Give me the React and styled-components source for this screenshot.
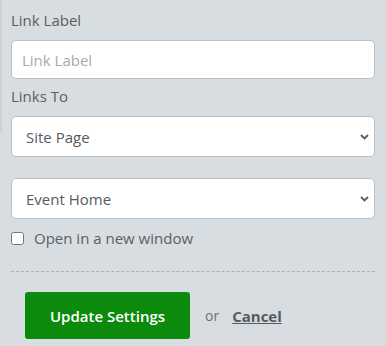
import React, { useState } from "react";
import styled, { createGlobalStyle } from "styled-components";

const GlobalStyle = createGlobalStyle`
  html, body {
    margin: 0;
    padding: 0;
    background: #d8dde1;
  }
  body {
    font-family: "Open Sans", "Liberation Sans", sans-serif;
  }
`;

const Panel = styled.div`
  position: relative;
  width: 386px;
  height: 346px;
  box-sizing: border-box;
  padding: 10px 11px 0 11px;
  background: #d8dde1;
  color: #555b60;
  overflow: hidden;
`;

const EdgeStrip = styled.div`
  position: absolute;
  left: 0;
  top: 0;
  width: 2px;
  height: 133px;
  background: #cdd2d6;
`;

const Label = styled.label`
  display: block;
  font-size: 15px;
  line-height: 20px;
  color: #5a6065;
  margin-bottom: ${(p) => p.$gap || 10}px;
`;

const TextInput = styled.input`
  display: block;
  width: 100%;
  height: 39px;
  box-sizing: border-box;
  border: 1px solid #b9c0c6;
  border-radius: 5px;
  background: #fff;
  padding: 0 10px;
  font-family: inherit;
  font-size: 15px;
  color: #555b60;
  outline: none;
  &::placeholder {
    color: #a4abb1;
  }
`;

const Field = styled.div`
  margin-bottom: ${(p) => p.$gap || 0}px;
`;

const SelectWrap = styled.div`
  position: relative;
  margin-bottom: ${(p) => p.$gap || 0}px;
`;

const Select = styled.select`
  display: block;
  width: 100%;
  height: 41px;
  box-sizing: border-box;
  appearance: none;
  -webkit-appearance: none;
  border: 1px solid #b9c0c6;
  border-radius: 5px;
  background: #fff;
  padding: 0 30px 0 14px;
  font-family: inherit;
  font-size: 15px;
  color: #555b60;
  outline: none;
`;

const Chevron = styled.svg`
  position: absolute;
  right: 6px;
  top: 50%;
  margin-top: -3px;
  width: 9px;
  height: 6px;
  pointer-events: none;
`;

const CheckRow = styled.label`
  display: flex;
  align-items: center;
  gap: 10px;
  font-size: 15px;
  line-height: 20px;
  color: #5a6065;
  margin-top: 9px;
`;

const Check = styled.input`
  width: 13px;
  height: 13px;
  margin: 0;
`;

const Divider = styled.div`
  border-top: 1px dashed #a9b0b6;
  margin-top: 23px;
`;

const Actions = styled.div`
  display: flex;
  align-items: center;
  padding: 20px 14px 0;
`;

const PrimaryButton = styled.button`
  width: 165px;
  height: 47px;
  border: none;
  border-radius: 3px;
  background: #0b8a0b;
  color: #fff;
  font-family: inherit;
  font-size: 15px;
  font-weight: 600;
  cursor: pointer;
`;

const Or = styled.span`
  margin-left: 15px;
  font-size: 14px;
  color: #6a7075;
`;

const CancelLink = styled.a`
  margin-left: 13px;
  font-size: 15px;
  font-weight: 700;
  color: #555b60;
  text-decoration: underline;
  cursor: pointer;
`;

const ChevronIcon = () => (
  <Chevron viewBox="0 0 9 6">
    <path d="M1 1l3.5 3.5L8 1" fill="none" stroke="#555b60" strokeWidth="1.8" />
  </Chevron>
);

export default function App() {
  const [label, setLabel] = useState("");
  const [linkType, setLinkType] = useState("site");
  const [page, setPage] = useState("event-home");
  const [newWindow, setNewWindow] = useState(false);

  return (
    <>
      <GlobalStyle />
      <Panel>
        <EdgeStrip />
        <Field $gap={7}>
          <Label htmlFor="link-label">Link Label</Label>
          <TextInput
            id="link-label"
            placeholder="Link Label"
            value={label}
            onChange={(e) => setLabel(e.target.value)}
          />
        </Field>
        <Label htmlFor="links-to">Links To</Label>
        <SelectWrap $gap={21}>
          <Select id="links-to" value={linkType} onChange={(e) => setLinkType(e.target.value)}>
            <option value="site">Site Page</option>
            <option value="url">External URL</option>
          </Select>
          <ChevronIcon />
        </SelectWrap>
        <SelectWrap>
          <Select value={page} onChange={(e) => setPage(e.target.value)}>
            <option value="event-home">Event Home</option>
            <option value="agenda">Agenda</option>
          </Select>
          <ChevronIcon />
        </SelectWrap>
        <CheckRow>
          <Check
            type="checkbox"
            checked={newWindow}
            onChange={(e) => setNewWindow(e.target.checked)}
          />
          Open in a new window
        </CheckRow>
        <Divider />
        <Actions>
          <PrimaryButton>Update Settings</PrimaryButton>
          <Or>or</Or>
          <CancelLink>Cancel</CancelLink>
        </Actions>
      </Panel>
    </>
  );
}
